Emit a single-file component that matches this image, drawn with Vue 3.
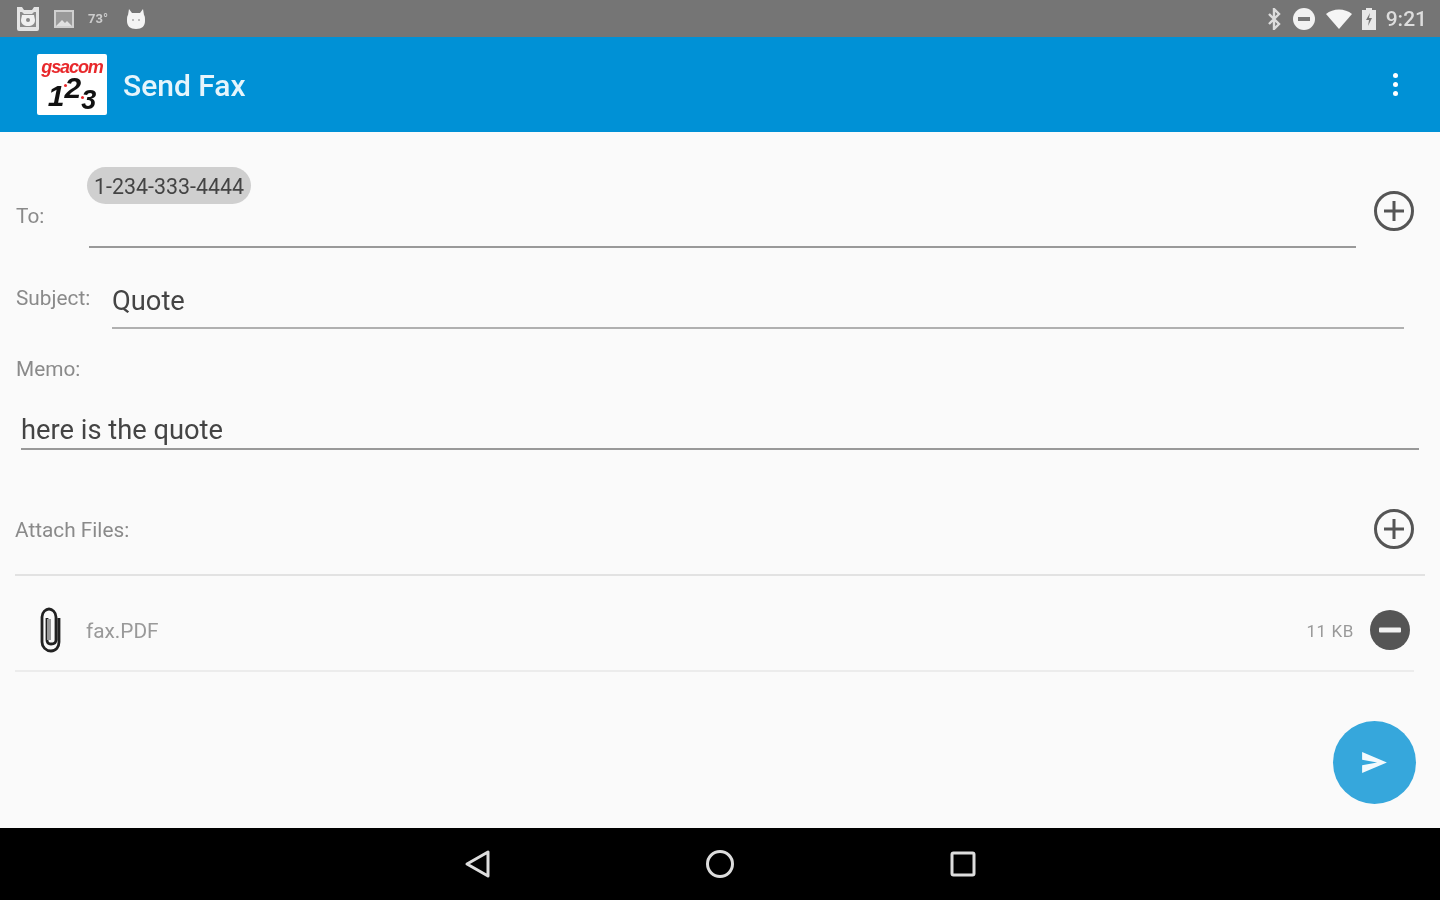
<template>
  <div class="screen">
    <div class="status-bar">
      <div class="status-left">
        <svg class="st-icon" width="24" height="27" viewBox="0 0 24 27">
          <path d="M1 2h5l2 3h8l2-3h5v22a2 2 0 0 1-2 2H3a2 2 0 0 1-2-2z" fill="#e4e4e4"/>
          <path d="M4 7h2l2 2h8l2-2h2v15H4z" fill="#8c8c8c"/>
          <path d="M6 10h12l1 5c0 4-3 6-7 6s-7-2-7-6z" fill="#f0f0f0"/>
          <circle cx="12" cy="15" r="2" fill="#888"/>
        </svg>
        <svg class="st-icon" width="20" height="18" viewBox="0 0 20 18">
          <rect x="1" y="1" width="18" height="16" fill="#9a9a9a" stroke="#d0d0d0" stroke-width="2"/>
          <path d="M2 16l6-6 3 3 2-2 5 5z" fill="#e0e0e0"/>
        </svg>
        <span class="temp">73°</span>
        <svg class="st-icon" width="20" height="22" viewBox="0 0 20 22">
          <path d="M3 1l3 4h8l3-4 1 6c1 1 1 3 1 6 0 5-3 8-9 8s-9-3-9-8c0-3 0-5 1-6z" fill="#f4f4f4"/>
          <circle cx="7" cy="12" r="1" fill="#aaa"/>
          <circle cx="13" cy="12" r="1" fill="#aaa"/>
        </svg>
      </div>
      <div class="status-right">
        <svg width="14" height="22" viewBox="0 0 14 22">
          <path d="M2 6l10 10-5 5V1l5 5L2 16" fill="none" stroke="#ddd" stroke-width="2.4"/>
        </svg>
        <svg width="24" height="24" viewBox="0 0 24 24">
          <circle cx="12" cy="12" r="11" fill="#f2f2f2"/>
          <rect x="6" y="10" width="12" height="4" fill="#777"/>
        </svg>
        <svg class="wifi" width="26" height="20" viewBox="0 0 26 20">
          <path d="M0 5C7-1 19-1 26 5L13 20z" fill="#f5f5f5"/>
        </svg>
        <svg class="battery" width="16" height="22" viewBox="0 0 16 22">
          <path d="M5 0h6v2h4v20H1V2h4z" fill="#e8e8e8"/>
          <path d="M9 5L5 12h3l-1 6 4-8H8z" fill="#777"/>
        </svg>
        <span class="clock">9:21</span>
      </div>
    </div>

    <header class="toolbar">
      <div class="logo">
        <span class="logo-brand">gsacom</span>
        <div class="logo-nums"><span class="one">1</span><span class="two">2</span><span class="three">3</span></div>
        <i class="dot dot-a"></i>
        <i class="dot dot-b"></i>
      </div>
      <h1>Send Fax</h1>
      <div class="menu"><i></i><i></i><i></i></div>
    </header>

    <main class="content">
      <section class="to-row">
        <span class="label to-label">To:</span>
        <div class="to-field">
          <span class="chip">1-234-333-4444</span>
        </div>
        <svg class="add-icon" width="42" height="42" viewBox="0 0 42 42">
          <circle cx="21" cy="21" r="18.5" fill="none" stroke="#555" stroke-width="3"/>
          <path d="M21 11v20M11 21h20" stroke="#555" stroke-width="3"/>
        </svg>
      </section>

      <section class="subject-row">
        <span class="label">Subject:</span>
        <div class="input-line subject-input">Quote</div>
      </section>

      <section class="memo">
        <span class="label">Memo:</span>
        <div class="input-line memo-input">here is the quote</div>
      </section>

      <section class="attach-row">
        <span class="label">Attach Files:</span>
        <svg class="add-icon" width="42" height="42" viewBox="0 0 42 42">
          <circle cx="21" cy="21" r="18.5" fill="none" stroke="#555" stroke-width="3"/>
          <path d="M21 11v20M11 21h20" stroke="#555" stroke-width="3"/>
        </svg>
      </section>

      <section class="file-row">
        <svg class="clip" width="26" height="46" viewBox="0 0 26 46">
          <path d="M21 11v24c0 5-3 9-8 9s-9-4-9-9V10c0-5 4-8 7-8s7 3 7 8v23c0 3-2 4-5 4s-4-2-4-4V11" fill="none" stroke="#222" stroke-width="2.8"/>
          <path d="M11 12v21" stroke="#999" stroke-width="4"/>
        </svg>
        <span class="file-name">fax.PDF</span>
        <span class="file-size">11 KB</span>
        <svg width="40" height="40" viewBox="0 0 40 40">
          <circle cx="20" cy="20" r="20" fill="#555"/>
          <rect x="9" y="17.5" width="22" height="5" rx="1" fill="#f2f2f2"/>
        </svg>
      </section>

      <button class="fab">
        <svg width="27" height="23" viewBox="0 0 30 26">
          <path d="M1 1l28 12L1 25v-9l17-3-17-3z" fill="#f4fafd"/>
        </svg>
      </button>
    </main>

    <nav class="nav-bar">
      <svg width="28" height="30" viewBox="0 0 28 30">
        <path d="M24 3v24L3 15z" fill="none" stroke="#ddd" stroke-width="3" stroke-linejoin="round"/>
      </svg>
      <svg width="30" height="30" viewBox="0 0 30 30">
        <circle cx="15" cy="15" r="12.5" fill="none" stroke="#ddd" stroke-width="3"/>
      </svg>
      <svg class="square" width="26" height="26" viewBox="0 0 26 26">
        <rect x="2" y="2" width="22" height="22" rx="1.5" fill="none" stroke="#ddd" stroke-width="3"/>
      </svg>
    </nav>
  </div>
</template>

<script setup>
</script>

<style scoped>
.screen {
  width: 1440px;
  height: 900px;
  display: flex;
  flex-direction: column;
  background: #fafafa;
  font-family: Roboto, "Liberation Sans", sans-serif;
  overflow: hidden;
  filter: blur(0.7px);
}

.status-bar {
  height: 37px;
  background: #757575;
  display: flex;
  justify-content: space-between;
  align-items: center;
  padding: 0 13px 0 16px;
  flex-shrink: 0;
}
.status-left, .status-right { display: flex; align-items: center; }
.status-left { gap: 14px; }
.status-right { gap: 11px; }
.temp { font-size: 13px; font-weight: 700; color: #ccc; width: 24px; }
.wifi { margin-left: -1px; }
.battery { margin-left: -2px; }
.clock { font-size: 21px; font-weight: 500; color: #ddd; margin-left: -2px; }

.toolbar {
  height: 95px;
  background: #0091d6;
  display: flex;
  align-items: center;
  padding: 0 42px 0 37px;
  flex-shrink: 0;
}
.toolbar h1 {
  margin: 2px 0 0 16px;
  font-size: 30px;
  font-weight: 500;
  color: #e6f5fc;
  flex: 1;
}
.logo {
  position: relative;
  width: 70px;
  height: 61px;
  margin-top: -1px;
  background: #fff;
  border-radius: 2px;
  display: flex;
  flex-direction: column;
  align-items: center;
  overflow: hidden;
}
.logo-brand {
  font: italic 700 18px/17px "Liberation Sans", sans-serif;
  letter-spacing: -1.1px;
  color: #e8282b;
  margin-top: 5px;
}
.logo-nums {
  display: flex;
  align-items: flex-start;
  font: italic 700 30px/24px "Liberation Sans", sans-serif;
  color: #111;
  height: 39px;
}
.logo-nums .one { margin-top: 8px; }
.logo-nums .two { margin-top: 0; }
.logo-nums .three { margin-top: 12px; font-size: 27px; }
.dot {
  position: absolute;
  width: 3px;
  height: 3px;
  border-radius: 50%;
  background: #e8282b;
}
.dot-a { left: 27px; top: 30px; }
.dot-b { left: 44px; top: 42px; }
.menu { display: flex; flex-direction: column; gap: 4px; }
.menu i { width: 5px; height: 5px; border-radius: 50%; background: #fff; }

.content {
  position: relative;
  flex: 1;
  padding: 0 15px;
  color: #444;
}
.label { font-size: 20.8px; color: #8a8a8a; }

.to-row {
  height: 116px;
  display: flex;
  position: relative;
  align-items: flex-start;
}
.to-label { width: 73px; margin: 72px 0 0 1px; }
.to-field {
  width: 1267px;
  height: 116px;
  border-bottom: 2px solid #999;
  box-sizing: border-box;
  padding-top: 35px;
}
.chip {
  display: inline-block;
  margin-left: -2px;
  padding: 1px 7px 0;
  height: 37px;
  line-height: 37px;
  box-sizing: border-box;
  border-radius: 19px;
  background: #cfcfcf;
  font-size: 21.4px;
  color: #444;
}
.add-icon { flex-shrink: 0; }
.to-row .add-icon { margin: 58px 0 0 17px; }

.subject-row {
  height: 82px;
  display: flex;
  align-items: flex-start;
}
.subject-row .label { width: 96px; margin: 38px 0 0 1px; }
.input-line {
  font-size: 27.3px;
  color: #444;
  border-bottom: 2px solid #b0b0b0;
  box-sizing: border-box;
}
.subject-input {
  width: 1292px;
  height: 81px;
  padding-top: 37px;
}

.memo { padding-top: 27px; }
.memo .label { display: block; margin-left: 1px; line-height: 24px; }
.memo-input {
  width: 1398px;
  height: 69px;
  margin: 0 0 0 6px;
  padding-top: 33px;
  border-bottom-color: #999;
}

.attach-row {
  height: 126px;
  border-bottom: 2px solid #e2e2e2;
  box-sizing: border-box;
  display: flex;
  justify-content: space-between;
  align-items: flex-start;
  width: 1410px;
  padding-top: 58px;
}
.attach-row .label { margin-top: 10px; }
.attach-row .add-icon { margin: 0 10px 0 0; }

.file-row {
  width: 1399px;
  height: 96px;
  border-bottom: 2px solid #ececec;
  box-sizing: border-box;
  display: flex;
  align-items: center;
  padding: 14px 4px 0 23px;
}
.file-name { font-size: 20.8px; color: #999; margin: 2px 0 0 22px; flex: 1; }
.file-size { font-size: 17px; color: #999; margin: 2px 16px 0 0; letter-spacing: 0.6px; }

.fab {
  position: absolute;
  left: 1333px;
  top: 589px;
  width: 83px;
  height: 83px;
  border: none;
  border-radius: 50%;
  background: #36a7dc;
  display: flex;
  align-items: center;
  justify-content: center;
  padding: 0;
}

.nav-bar {
  height: 72px;
  background: #000;
  flex-shrink: 0;
  display: flex;
  justify-content: center;
  align-items: center;
  gap: 213px;
  box-sizing: border-box;
}
.square { margin-left: 2px; }
</style>
